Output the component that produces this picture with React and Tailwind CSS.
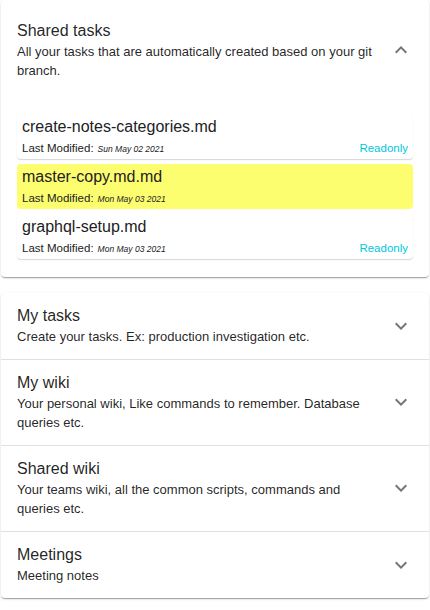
import React from "react";

const Chevron = ({ up }) => (
  <svg
    viewBox="0 0 24 24"
    width="24"
    height="24"
    className={up ? "rotate-180" : ""}
    fill="rgba(0,0,0,0.54)"
  >
    <path d="M16.59 8.59L12 13.17 7.41 8.59 6 10l6 6 6-6z" />
  </svg>
);

const Summary = ({ title, subtitle, expanded }) => (
  <div className={`flex items-center px-4 ${expanded ? "py-5" : "pt-[12px] pb-[13px]"}`}>
    <div className="flex-1 pr-[12px]">
      <div className="text-[16px] leading-[22px] text-[rgba(0,0,0,0.87)]">{title}</div>
      <div className="text-[13px] leading-[19px] text-[rgba(0,0,0,0.87)]">{subtitle}</div>
    </div>
    <div className="shrink-0 w-6 h-6 flex items-center justify-center">
      <Chevron up={expanded} />
    </div>
  </div>
);

const Item = ({ name, date, readonly, active }) => (
  <div
    className={`rounded-[4px] px-[5px] pt-[3px] pb-[4px] ${
      active ? "bg-[#fdfd70]" : "bg-white shadow-[0_1px_1px_rgba(0,0,0,0.16)]"
    }`}
  >
    <div className="h-[20px] text-[16px] leading-[20px] text-[#222]">{name}</div>
    <div className="mt-[4px] h-[14px] overflow-hidden flex items-baseline leading-[14px]">
      <span className="text-[11.5px] text-[#222]">Last Modified:</span>
      <span className="ml-[4px] text-[8.5px] italic text-[#222]">{date}</span>
      <span className="flex-1" />
      {readonly && <span className="text-[11.5px] text-[#00c8dc]">Readonly</span>}
    </div>
  </div>
);

const sections = [
  { title: "My tasks", subtitle: "Create your tasks. Ex: production investigation etc." },
  { title: "My wiki", subtitle: "Your personal wiki, Like commands to remember. Database queries etc." },
  { title: "Shared wiki", subtitle: "Your teams wiki, all the common scripts, commands and queries etc." },
  { title: "Meetings", subtitle: "Meeting notes" },
];

export default function App() {
  return (
    <div
      className="w-[430px] min-h-[610px] bg-white px-[1px]"
      style={{ fontFamily: '"Liberation Sans", Arial, Helvetica, sans-serif' }}
    >
      <div className="rounded-[4px] bg-white shadow-[0_2px_1px_-1px_rgba(0,0,0,0.2),0_1px_1px_0_rgba(0,0,0,0.14),0_1px_3px_0_rgba(0,0,0,0.12)]">
        <Summary
          expanded
          title="Shared tasks"
          subtitle="All your tasks that are automatically created based on your git branch."
        />
        <div className="px-4 pt-[14px] pb-[18px] flex flex-col gap-[5px]">
          <Item name="create-notes-categories.md" date="Sun May 02 2021" readonly />
          <Item name="master-copy.md.md" date="Mon May 03 2021" active />
          <Item name="graphql-setup.md" date="Mon May 03 2021" readonly />
        </div>
      </div>

      <div className="mt-4 rounded-[4px] bg-white divide-y divide-[rgba(0,0,0,0.12)] shadow-[0_2px_1px_-1px_rgba(0,0,0,0.2),0_1px_1px_0_rgba(0,0,0,0.14),0_1px_3px_0_rgba(0,0,0,0.12)]">
        {sections.map((s) => (
          <Summary key={s.title} title={s.title} subtitle={s.subtitle} />
        ))}
      </div>
    </div>
  );
}
